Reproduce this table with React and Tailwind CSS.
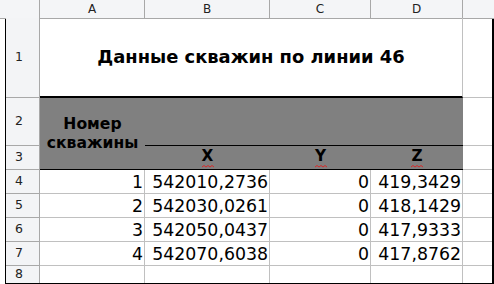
import React from "react";

const wells = [
  { n: 1, x: "542010,2736", y: 0, z: "419,3429" },
  { n: 2, x: "542030,0261", y: 0, z: "418,1429" },
  { n: 3, x: "542050,0437", y: 0, z: "417,9333" },
  { n: 4, x: "542070,6038", y: 0, z: "417,8762" },
];

const cols = ["A", "B", "C", "D"];

// axis letter with the red spellcheck squiggle under it
function AxisLabel({ children }) {
  return (
    <div className="flex flex-col items-center">
      <span className="leading-[15px]">{children}</span>
      <svg width="12" height="3" viewBox="0 0 12 3" className="mt-[1px]">
        <path d="M0 2 L2 0.5 L4 2 L6 0.5 L8 2 L10 0.5 L12 2" fill="none" stroke="#e02020" strokeWidth="0.9" />
      </svg>
    </div>
  );
}

function RowHead({ n, last = false }) {
  return (
    <div
      className={`flex items-center justify-center pr-[7px] bg-[#f3f4f6] border-r border-[#a8a8a8] text-[12.5px] text-[#222] ${
        last ? "" : "border-b"
      }`}
    >
      {n}
    </div>
  );
}

function Cell({ children }) {
  return (
    <div className="flex items-end justify-end pr-[1px] pb-[1px] border-r border-b border-[#c0c0c0] leading-[20px]">
      {children}
    </div>
  );
}

export default function App() {
  return (
    <div className="w-[494px] h-[284px] bg-white overflow-hidden font-['DejaVu_Sans',sans-serif] text-black">
      {/* column letters */}
      <div className="grid grid-cols-[40px_105px_125px_101px_92px_31px] h-[18px] bg-[#f4f5f7] text-[12px] text-[#222]">
        <div className="border-r border-b border-[#a8a8a8]" />
        {cols.map((c) => (
          <div key={c} className="flex items-center justify-center border-r border-b border-[#a8a8a8]">
            {c}
          </div>
        ))}
        <div className="border-b border-[#a8a8a8]" />
      </div>

      <div className="ml-[5px] h-[266px] border-l border-r-2 border-b border-black">
        <div className="grid grid-cols-[34px_105px_125px_101px_92px_29px] grid-rows-[80px_48px_24px_24px_24px_24px_24px_17px] text-[17.33px]">
          {/* row 1: title */}
          <RowHead n={1} />
          <div className="col-span-4 flex items-center justify-center border-r border-[#c0c0c0] border-b-2 border-b-black font-bold text-[17.9px]">
            Данные скважин по линии 46
          </div>
          <div className="border-b border-[#c0c0c0]" />

          {/* rows 2-3: header */}
          <RowHead n={2} />
          <div className="row-span-2 flex items-center justify-center text-center bg-[#808080] border-b border-black font-bold text-[15.6px] leading-[19px]">
            Номер
            <br />
            скважины
          </div>
          <div className="col-span-3 bg-[#808080] border-b border-black" />
          <div className="border-b border-[#c0c0c0]" />

          <RowHead n={3} />
          {["X", "Y", "Z"].map((a) => (
            <div key={a} className="flex items-end justify-center bg-[#808080] border-b border-black font-bold text-[15.3px] pb-[1px]">
              <AxisLabel>{a}</AxisLabel>
            </div>
          ))}
          <div className="border-b border-[#c0c0c0]" />

          {/* rows 4-7: data */}
          {wells.map((w, i) => (
            <React.Fragment key={w.n}>
              <RowHead n={i + 4} />
              <Cell>{w.n}</Cell>
              <Cell>{w.x}</Cell>
              <Cell>{w.y}</Cell>
              <Cell>{w.z}</Cell>
              <div className="border-b border-[#c0c0c0]" />
            </React.Fragment>
          ))}

          {/* row 8 */}
          <RowHead n={8} last />
          <div className="border-r border-[#c0c0c0]" />
          <div className="border-r border-[#c0c0c0]" />
          <div className="border-r border-[#c0c0c0]" />
          <div className="border-r border-[#c0c0c0]" />
          <div />
        </div>
      </div>
    </div>
  );
}
